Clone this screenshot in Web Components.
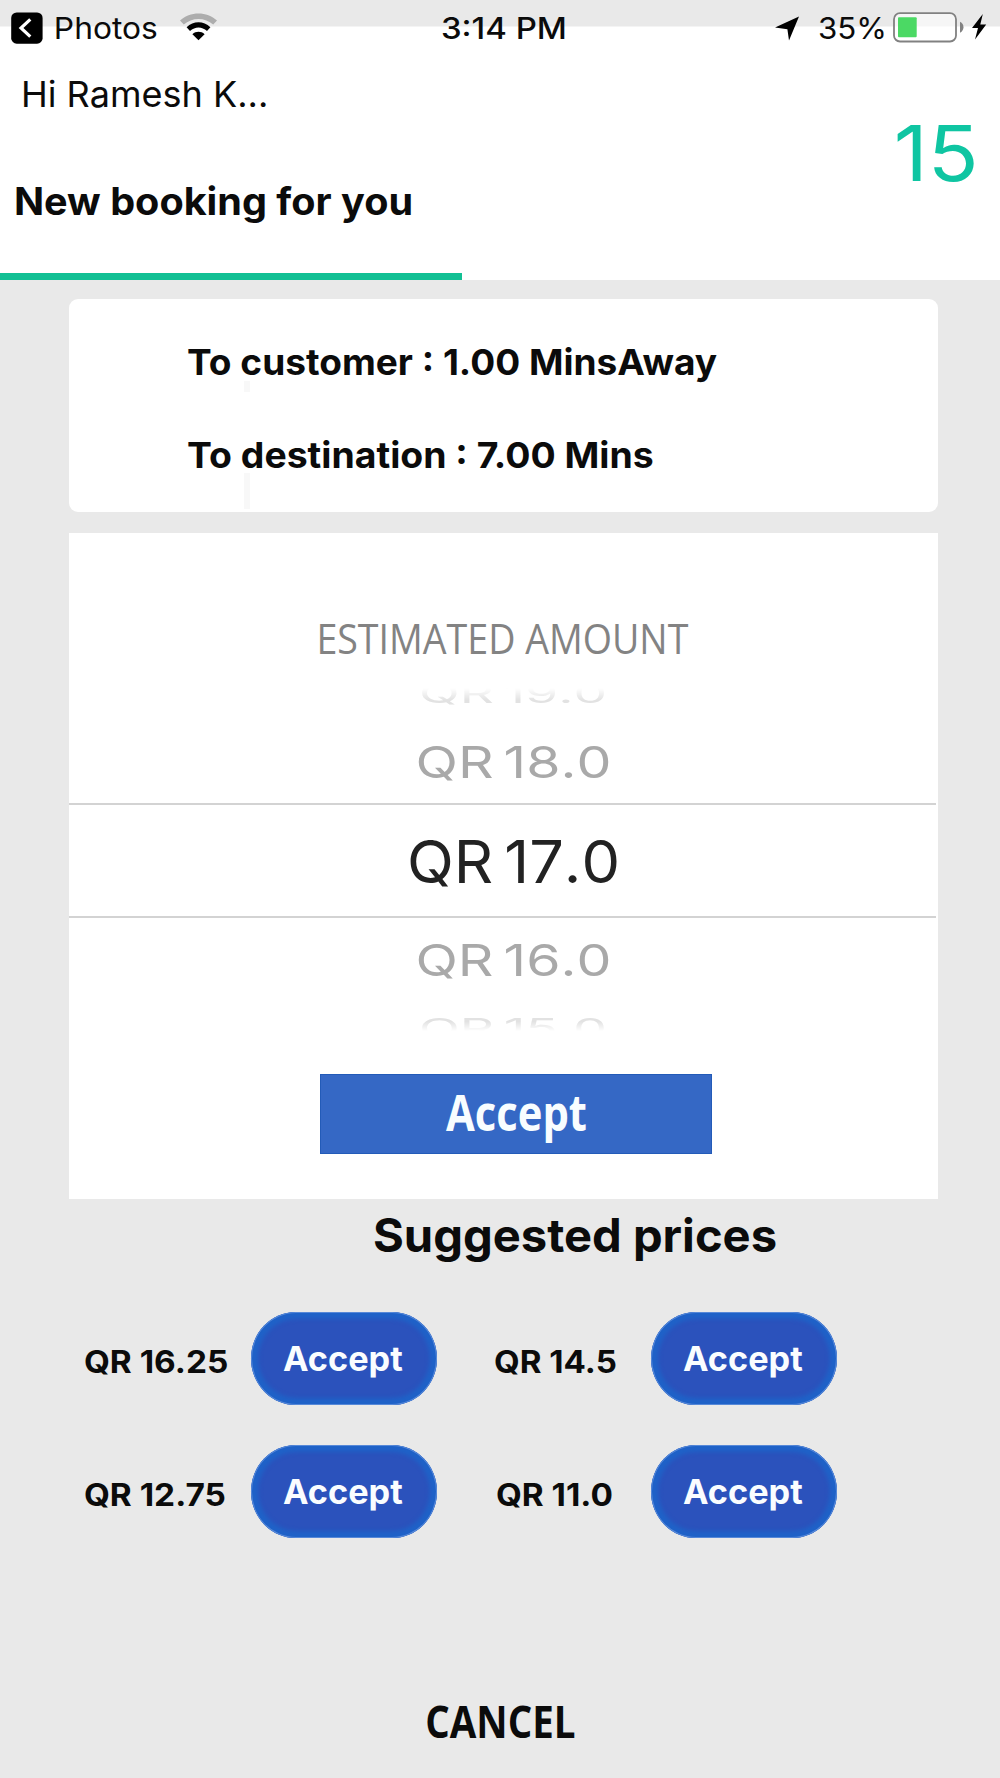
<!DOCTYPE html>
<html lang="en">
<head>
<meta charset="utf-8">
<title>New booking</title>
<style>
html,body{margin:0;padding:0;background:#e9e9e9}
body{width:1000px;height:1778px;overflow:hidden;font-family:Inter,"Liberation Sans",sans-serif;color:#0b0b0b}
</style>
</head>
<body>
<booking-screen></booking-screen>
<script>
const define = (name, html, setup) => customElements.define(name, class extends HTMLElement {
  connectedCallback() {
    if (this.shadowRoot) return;
    this.attachShadow({ mode: 'open' }).innerHTML = html;
    if (setup) setup.call(this, this.shadowRoot);
  }
});

/* One line of text whose visible glyphs span exactly "w" pixels; the box is "h" tall, centred on the capitals. */
class FitText extends HTMLElement {
  connectedCallback() {
    if (this.shadowRoot) return;
    const w = +this.getAttribute('w'), h = +this.getAttribute('h');
    const size = +this.getAttribute('size'), weight = this.getAttribute('weight') || '400';
    const family = this.getAttribute('family') || 'Inter';
    const root = this.attachShadow({ mode: 'open' });
    root.innerHTML = `<style>
      :host{display:block;flex:none;width:${w}px;height:${h}px}
      span{display:inline-block;white-space:nowrap;transform-origin:0 50%;
        font:${weight} ${size}px/${h}px "${family}","Liberation Sans",sans-serif;font-kerning:var(--kern,auto);word-spacing:var(--word,0)}
    </style><span></span>`;
    const span = root.querySelector('span');
    span.textContent = this.getAttribute('text');
    const ctx = document.createElement('canvas').getContext('2d');
    ctx.font = `${weight} ${size}px "${family}"`;
    const m = ctx.measureText(span.textContent);
    const left = -m.actualBoundingBoxLeft;
    const right = m.width - m.actualBoundingBoxRight;
    const ink = span.getBoundingClientRect().width - left - right;
    const s = w / ink;
    const cap = ctx.measureText('H').actualBoundingBoxAscent;
    const dy = (cap - (m.fontBoundingBoxAscent - m.fontBoundingBoxDescent)) / 2;
    span.style.transform = `translate(${-left * s}px,${dy}px) scaleX(${s})`;
  }
}
customElements.define('fit-text', FitText);

define('status-bar', `<style>
  :host{display:flex;box-sizing:border-box;height:56px;padding:12px 0 0 11px;align-items:flex-start;
    background:linear-gradient(#e9e9e9 26px,#fff 27px);color:#0b0b0b}
  svg{display:block;flex:none}
  fit-text{margin-top:6px}
  </style>
  <svg width="32" height="32" viewBox="0 0 32 32"><rect x=".2" y=".5" width="31.4" height="31.2" rx="5.5"/><path d="M19.3 7.3 10 16l9.3 8.7" fill="none" stroke="#fff" stroke-width="3.2"/></svg>
  <fit-text style="margin-left:12.5px" text="Photos" w="101" h="21" size="29.8" weight="370"></fit-text>
  <svg style="margin-left:23.5px" width="37" height="30" viewBox="0 0 37 30"><path d="M0 8.5C10-1 27-1 37 8.5L33.2 12.6C25 5 12 5 3.8 12.6Z" fill="#adadad"/><path d="M6.6 15.2C13.5 8.7 23.5 8.7 30.4 15.2L27 18.9C22 14.2 15 14.2 10 18.9Z"/><path d="M12.4 22.2C16 19 21 19 24.6 22.2L18.5 28.2Z"/></svg>
  <fit-text style="margin-left:224.5px" text="3:14 PM" w="122.5" h="21" size="29.8" weight="550"></fit-text>
  <svg style="margin:3.5px 0 0 210.5px" width="24" height="25" viewBox="0 0 24 25"><path d="M24 .5 14 24.5 12.4 13.2 0 11.4Z"/></svg>
  <fit-text style="margin-left:20px" text="35%" w="64.5" h="21" size="29.8" weight="370"></fit-text>
  <svg style="margin-left:10px" width="71" height="31" viewBox="0 0 71 31"><rect x="1" y="1.2" width="62" height="28.3" rx="6" fill="#fff" fill-opacity=".6" stroke="#818181" stroke-width="1.8"/><rect x="5" y="5.2" width="18.7" height="20" rx="1" fill="#4bd964"/><path d="M67 9.8Q70.5 11.8 70.5 15.2T67 20.8Z" fill="#818181"/></svg>
  <svg style="margin:2px 0 0 8px" width="15" height="26" viewBox="0 0 15 26"><path d="M10.8 0 0 14H6L3 25.5 14.2 10.5H8.3Z"/></svg>`);

define('booking-header', `<style>
  :host{display:block;height:224px;background:#fff;overflow:hidden}
  .row{display:flex;justify-content:space-between;height:216.5px}
  .count{color:#0fc5a2;margin:69px 26px 0 0}
  .bar{width:462px;height:7.5px;background:#12c094}
  </style>
  <div class="row"><div>
    <fit-text style="margin:25px 0 0 23.5px" text="Hi Ramesh K..." w="242" h="26" size="35.7" weight="370"></fit-text>
    <fit-text style="margin:80.5px 0 0 16px" text="New booking for you" w="395.5" h="27" size="37.8" weight="700"></fit-text>
  </div><fit-text class="count" text="15" w="77.5" h="56" size="77" weight="400"></fit-text></div>
  <div class="bar"></div>`);

define('eta-card', `<style>
  :host{display:block;box-sizing:border-box;margin:18.5px 61.6px 0 69.4px;height:213px;border-radius:9px;background:#fff;padding:50px 0 0 119px}
  i{display:block;width:6px;margin-left:56px;background:#f8f8f8}
  </style>
  <fit-text text="To customer : 1.00 MinsAway" w="529.5" h="26" size="36" weight="650"></fit-text>
  <i style="height:11px;margin-top:6px"></i>
  <fit-text style="margin-top:50px" text="To destination : 7.00 Mins" w="464.5" h="26" size="36" weight="650"></fit-text>
  <i style="height:36px;margin-top:5px"></i>`);

define('price-wheel', `<style>
  :host{display:flex;flex-direction:column;color:#a9a9a9;--kern:none;--word:-.1em}
  div{flex:none;box-sizing:border-box}
  .far{height:26px;padding-left:351.5px;color:#e2e2e2}
  .top{padding-top:1px;-webkit-mask:linear-gradient(transparent 24%,#000 70%)}
  .bot{padding-top:3px;-webkit-mask:linear-gradient(#000 25%,transparent 62%)}
  .sel{height:115px;border:solid #d3d3d3;border-width:2px 0;color:#222;margin:25px 2px 0 0;padding:35px 0 0 341px}
  .near{margin-left:348.5px}
  </style>
  <div class="far top"><fit-text text="QR 19.0" w="184" h="20" size="27"></fit-text></div>
  <fit-text class="near" style="margin-top:38px" text="QR 18.0" w="191" h="32" size="44.3"></fit-text>
  <div class="sel"><fit-text text="QR 17.0" w="206.5" h="43" size="59.5"></fit-text></div>
  <fit-text class="near" style="margin-top:26.5px" text="QR 16.0" w="191" h="32" size="44.3"></fit-text>
  <div class="far bot" style="margin-top:38.5px"><fit-text text="QR 15.0" w="184" h="20" size="27"></fit-text></div>`);

define('amount-card', `<style>
  :host{display:block;box-sizing:border-box;margin:21.5px 61.6px 0 69.4px;height:666px;background:#fff;padding-top:92px}
  .title{color:#838383;margin-left:250.5px}
  price-wheel{margin-top:27px}
  .btn{box-sizing:border-box;display:block;width:392px;height:80px;margin:33.5px 0 0 250.6px;padding:20px 0 0 125px;border:1px solid #235bb8;background:#3568c5;color:#f8fdff}
  </style>
  <fit-text class="title" text="ESTIMATED AMOUNT" w="368.5" h="29.5" size="41.5" family="Open Sans" weight="440"></fit-text>
  <price-wheel></price-wheel>
  <div class="btn" role="button"><fit-text text="Accept" w="140" h="36.5" size="51" family="Open Sans" weight="670"></fit-text></div>`);

define('price-offer', `<style>
  :host{display:flex;align-items:flex-start;height:93px}
  .pill{box-sizing:border-box;width:186px;height:93px;border-radius:45px/46.5px;background:#2b52bc;
    box-shadow:inset 0 0 0 1px #5688d8,inset 0 0 4px 7px #1f62c8;color:#fafdff;padding:34.5px 0 0 32px}
  .label{width:var(--label);padding-top:39px;box-sizing:border-box}
  </style><div class="label"></div><div class="pill" role="button"><fit-text text="Accept" w="119.5" h="24.5" size="33.5" weight="680"></fit-text></div>`,
  function (root) {
    const label = root.querySelector('.label');
    label.style.paddingLeft = this.getAttribute('inset') + 'px';
    label.innerHTML = `<fit-text text="${this.getAttribute('price')}" w="${this.getAttribute('w')}" h="22.5" size="31" weight="670"></fit-text>`;
  });

define('suggested-prices', `<style>
  :host{display:block}
  .grid{display:grid;margin:60px 0 0 85.4px;grid-template-columns:352px 400px;row-gap:40px}
  .a{--label:166px}.b{--label:214px}
  </style>
  <fit-text style="margin:18.5px 0 0 374px" text="Suggested prices" w="402" h="34" size="46.5" weight="700"></fit-text>
  <div class="grid">
    <price-offer class="a" price="QR 16.25" inset="0" w="142.5"></price-offer>
    <price-offer class="b" price="QR 14.5" inset="57.5" w="121"></price-offer>
    <price-offer class="a" price="QR 12.75" inset="0" w="140"></price-offer>
    <price-offer class="b" price="QR 11.0" inset="60" w="115"></price-offer>
  </div>`);

define('booking-screen', `<style>
  :host{display:flex;flex-direction:column;width:1000px;height:1778px;background:#e9e9e9}
  status-bar,booking-header,eta-card,amount-card,suggested-prices{flex:none}
  </style>
  <status-bar></status-bar><booking-header></booking-header><eta-card></eta-card><amount-card></amount-card>
  <suggested-prices></suggested-prices>
  <fit-text style="margin:168.5px 0 0 426.5px" text="CANCEL" w="147.5" h="32" size="44.5" family="Open Sans" weight="700"></fit-text>`);
</script>
</body>
</html>
